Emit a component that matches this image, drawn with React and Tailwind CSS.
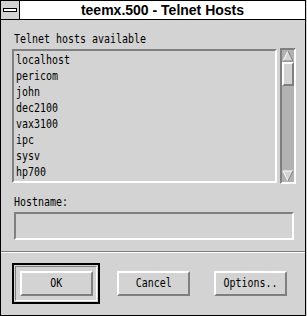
const hosts = ["localhost", "pericom", "john", "dec2100", "vax3100", "ipc", "sysv", "hp700"];

function Mono({ children, center }) {
  return (
    <span
      className={
        center
          ? "inline-block origin-center scale-x-[0.83] whitespace-pre"
          : "inline-block origin-left scale-x-[0.83] whitespace-pre"
      }
    >
      {children}
    </span>
  );
}

function Button({ label, className = "" }) {
  return (
    <div
      className={`flex h-[25px] w-[73px] items-center justify-center border-2 border-t-white border-l-white border-r-[#7f7f7f] border-b-[#7f7f7f] bg-[#d3d3d3] text-[12px] leading-[13px] ${className}`}
    >
      <Mono center>{label}</Mono>
    </div>
  );
}

function UpArrow() {
  return (
    <svg width="12" height="12" viewBox="0 0 12 12" className="block">
      <rect width="12" height="12" fill="#b2b2b2" />
      <polygon points="6,1 11,11 1,11" fill="#d3d3d3" />
      <polyline points="1,11 6,1" stroke="#ffffff" strokeWidth="1" fill="none" />
      <polyline points="6,1 11,11 1,11" stroke="#7f7f7f" strokeWidth="1" fill="none" />
    </svg>
  );
}

function DownArrow() {
  return (
    <svg width="12" height="12" viewBox="0 0 12 12" className="block">
      <rect width="12" height="12" fill="#b2b2b2" />
      <polygon points="1,1 11,1 6,11" fill="#d3d3d3" />
      <polyline points="6,11 1,1 11,1" stroke="#ffffff" strokeWidth="1" fill="none" />
      <polyline points="11,1 6,11" stroke="#7f7f7f" strokeWidth="1" fill="none" />
    </svg>
  );
}

export default function App() {
  return (
    <div className="h-[316px] w-[307px] bg-[#d3d3d3] font-['DejaVu_Sans_Mono',monospace] text-black">
      <div className="flex h-[316px] w-[306px] flex-col border border-black bg-[#d3d3d3]">
        {/* Title bar */}
        <div className="flex h-[19px] shrink-0 border-b border-black">
          <div className="flex h-[18px] w-[19px] items-center border-r border-black bg-[#d3d3d3] pl-[2px]">
            <div className="h-[4px] w-[14px] border border-black bg-white" />
          </div>
          <div className="flex flex-1 items-center justify-center bg-white font-['Liberation_Sans',Arial,sans-serif] text-[14px] font-bold leading-[18px]">
            teemx.500 - Telnet Hosts
          </div>
        </div>

        {/* Body */}
        <div className="flex flex-1 flex-col">
          <div className="ml-[13px] mt-[13px] h-[13px] text-[12px] leading-[13px]">
            <Mono>Telnet hosts available</Mono>
          </div>

          <div className="ml-[11px] mt-[2px] flex h-[136px] items-start">
            <div className="mt-[1px] h-[134px] w-[265px] overflow-hidden border-2 border-t-[#7f7f7f] border-l-[#7f7f7f] border-r-white border-b-white pl-[2px] pt-[1px] text-[12px]">
              {hosts.map((h) => (
                <div key={h} className="h-[16px] leading-[16px]">
                  <Mono>{h}</Mono>
                </div>
              ))}
            </div>
            <div className="ml-[3px] flex h-[136px] w-[16px] flex-col border-2 border-t-[#7f7f7f] border-l-[#7f7f7f] border-r-white border-b-white bg-[#b2b2b2]">
              <UpArrow />
              <div className="h-[24px] border-2 border-t-white border-l-white border-r-[#7f7f7f] border-b-[#7f7f7f] bg-[#d3d3d3]" />
              <div className="flex-1" />
              <DownArrow />
            </div>
          </div>

          <div className="ml-[13px] mt-[12px] h-[13px] text-[12px] leading-[13px]">
            <Mono>Hostname:</Mono>
          </div>
          <div className="ml-[13px] mt-[3px] h-[28px] w-[280px] border-2 border-t-[#7f7f7f] border-l-[#7f7f7f] border-r-white border-b-white" />

          <div className="mt-[11px] border-t border-b border-t-[#7f7f7f] border-b-white" />

          {/* Buttons */}
          <div className="ml-[11px] mt-[10px] flex items-start">
            <div className="h-[41px] w-[88px] border-2 border-black p-[1px]">
              <div className="h-full w-full border border-t-[#7f7f7f] border-l-[#7f7f7f] border-r-white border-b-white pl-[4px] pt-[4px]">
                <Button label="OK" />
              </div>
            </div>
            <Button label="Cancel" className="ml-[17px] mt-[8px]" />
            <Button label="Options.." className="ml-[24px] mt-[8px]" />
          </div>
        </div>
      </div>
    </div>
  );
}
